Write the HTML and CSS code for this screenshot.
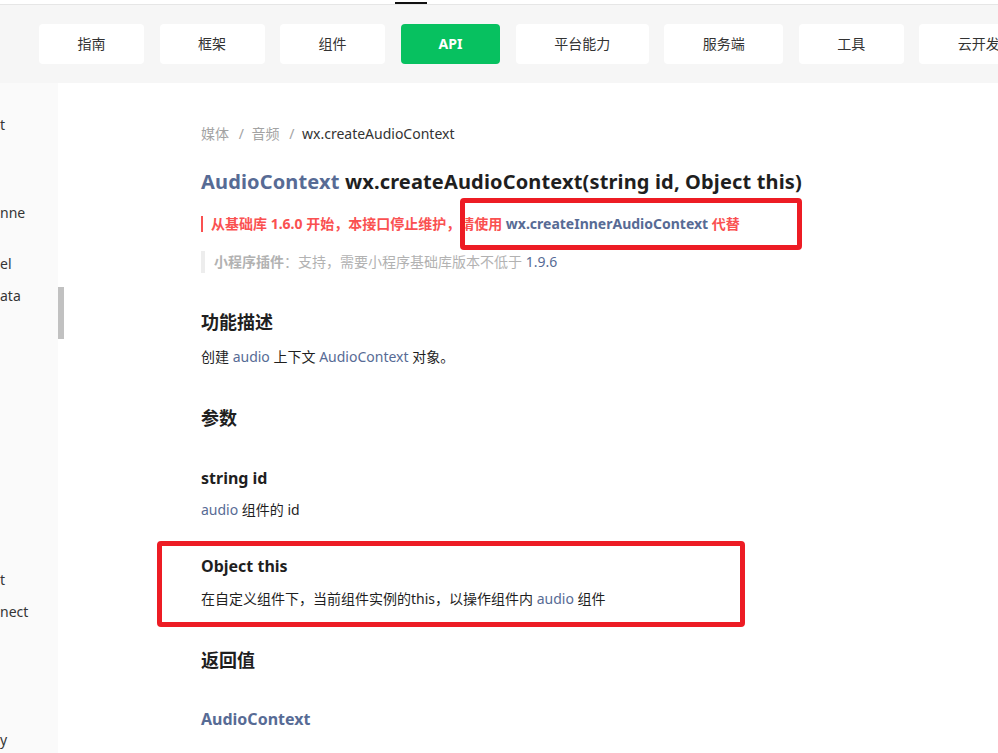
FILE: index.html
```html
<!DOCTYPE html>
<html lang="zh-CN">
<head>
  <meta charset="UTF-8" />
  <title>wx.createAudioContext</title>
  <link rel="stylesheet" href="styles.css">
</head>
<body>

  <div class="topbar">
    <div class="topbar-active"></div>
  </div>

  <nav class="tabs">
    <a class="tab">指南</a>
    <a class="tab">框架</a>
    <a class="tab">组件</a>
    <a class="tab active">API</a>
    <a class="tab">平台能力</a>
    <a class="tab">服务端</a>
    <a class="tab">工具</a>
    <a class="tab">云开发</a>
  </nav>

  <div class="layout">
    <aside class="sidebar">
      <div class="side-item s1">t</div>
      <div class="side-item s2">nne</div>
      <div class="side-item s3">el</div>
      <div class="side-item s4">ata</div>
      <div class="side-item s5">t</div>
      <div class="side-item s6">nect</div>
      <div class="side-item s7">y</div>
    </aside>
    <div class="scrollbar">
      <div class="scroll-thumb"></div>
    </div>

    <main class="content">
      <div class="crumbs">
        <span class="crumb">媒体</span>
        <span class="sep">/</span>
        <span class="crumb">音频</span>
        <span class="sep">/</span>
        <span class="crumb-current">wx.createAudioContext</span>
      </div>

      <h1 class="api-title"><a class="link">AudioContext</a> wx.createAudioContext(string id, Object this)</h1>

      <p class="deprecated">从基础库 1.6.0 开始，本接口停止维护，请使用 <a class="link">wx.createInnerAudioContext</a> 代替</p>

      <p class="plugin-note"><b>小程序插件</b>：支持，需要小程序基础库版本不低于 <a class="link">1.9.6</a></p>

      <h2 class="sec sec-desc">功能描述</h2>
      <p class="text t-desc">创建 <a class="link">audio</a> 上下文 <a class="link">AudioContext</a> 对象。</p>

      <h2 class="sec sec-params">参数</h2>

      <h3 class="param p-id">string id</h3>
      <p class="text t-id"><a class="link">audio</a> 组件的 id</p>

      <h3 class="param p-this">Object this</h3>
      <p class="text t-this">在自定义组件下，当前组件实例的this，以操作组件内 <a class="link">audio</a> 组件</p>

      <h2 class="sec sec-return">返回值</h2>

      <h3 class="param p-return"><a class="link">AudioContext</a></h3>

      <!-- annotation boxes drawn over the doc -->
      <div class="mark mark-1"></div>
      <div class="mark mark-2"></div>
    </main>
  </div>

</body>
</html>
```

FILE: styles.css
```css
* {
  box-sizing: border-box;
}

body {
  margin: 0;
  height: 753px;
  overflow: hidden;
  background: #fff;
  color: #1f1f1f;
  font-family: "Noto Sans", "Noto Sans CJK SC", sans-serif;
  font-size: 14px;
}

.topbar {
  height: 5px;
  padding-top: 2px;
  background: #fff;
  border-bottom: 1px solid #e6e6e6;
}

.topbar-active {
  width: 32px;
  height: 2px;
  margin-left: 395px;
  background: #111;
}

.tabs {
  display: flex;
  gap: 15.5px;
  height: 78px;
  padding: 19px 0 0 39px;
  background: #f6f6f6;
  white-space: nowrap;
  overflow: hidden;
}

.tab {
  flex-shrink: 0;
  height: 40px;
  line-height: 40px;
  padding: 0 38.5px;
  background: #fff;
  border-radius: 4px;
  color: #333;
  font-size: 14px;
  text-align: center;
}

.tab.active {
  background: #07c160;
  color: #fff;
  font-weight: bold;
  padding: 0 38px;
}

.layout {
  display: flex;
}

.sidebar {
  width: 58px;
  height: 670px;
  background: #fafafa;
  overflow: hidden;
  color: #353535;
}

.side-item {
  line-height: 20px;
  white-space: nowrap;
}

.s1 { margin-top: 32px; }
.s2 { margin-top: 68px; }
.s3 { margin-top: 31px; }
.s4 { margin-top: 12px; }
.s5 { margin-top: 264px; }
.s6 { margin-top: 12px; }
.s7 { margin-top: 108px; }

.scrollbar {
  width: 6px;
}

.scroll-thumb {
  height: 52px;
  margin-top: 204px;
  background: #c1c1c1;
}

.content {
  position: relative;
  flex: 1;
  padding: 40px 0 0 137px;
}

.link {
  color: #576b95;
  text-decoration: none;
}

.crumbs {
  line-height: 22px;
  color: #333;
}

.crumb,
.sep {
  color: #a3a3a3;
}

.sep {
  margin: 0 4px 0 6px;
}

h1,
h2,
h3,
p {
  margin: 0;
}

.api-title {
  margin-top: 23px;
  font-size: 20px;
  line-height: 28px;
  letter-spacing: 0.15px;
  color: #1f1f1f;
}

.deprecated {
  margin-top: 20px;
  padding-left: 8px;
  border-left: 2px solid #fa5151;
  line-height: 16px;
  font-size: 14px;
  font-weight: bold;
  color: #fa5151;
}

.plugin-note {
  display: inline-block;
  margin-top: 19px;
  padding-left: 9px;
  border-left: 4px solid #ededed;
  line-height: 22px;
  font-size: 14px;
  color: #b2b2b2;
}

.plugin-note b {
  color: #b2b2b2;
}

.sec {
  font-size: 18px;
  line-height: 26px;
}

.param {
  font-size: 16px;
  line-height: 24px;
}

.text {
  line-height: 22px;
}

.sec-desc { margin-top: 36px; }
.t-desc { margin-top: 11px; }
.sec-params { margin-top: 37px; }
.p-id { margin-top: 35px; }
.t-id { margin-top: 9px; }
.p-this { margin-top: 33px; }
.t-this { margin-top: 10px; }
.sec-return { margin-top: 37px; }
.p-return { margin-top: 34px; }

.mark {
  position: absolute;
  border: 5px solid #ed1c24;
  border-radius: 4px;
}

.mark-1 {
  left: 396px;
  top: 115px;
  width: 342px;
  height: 52px;
}

.mark-2 {
  left: 93px;
  top: 458px;
  width: 588px;
  height: 86px;
}
```
